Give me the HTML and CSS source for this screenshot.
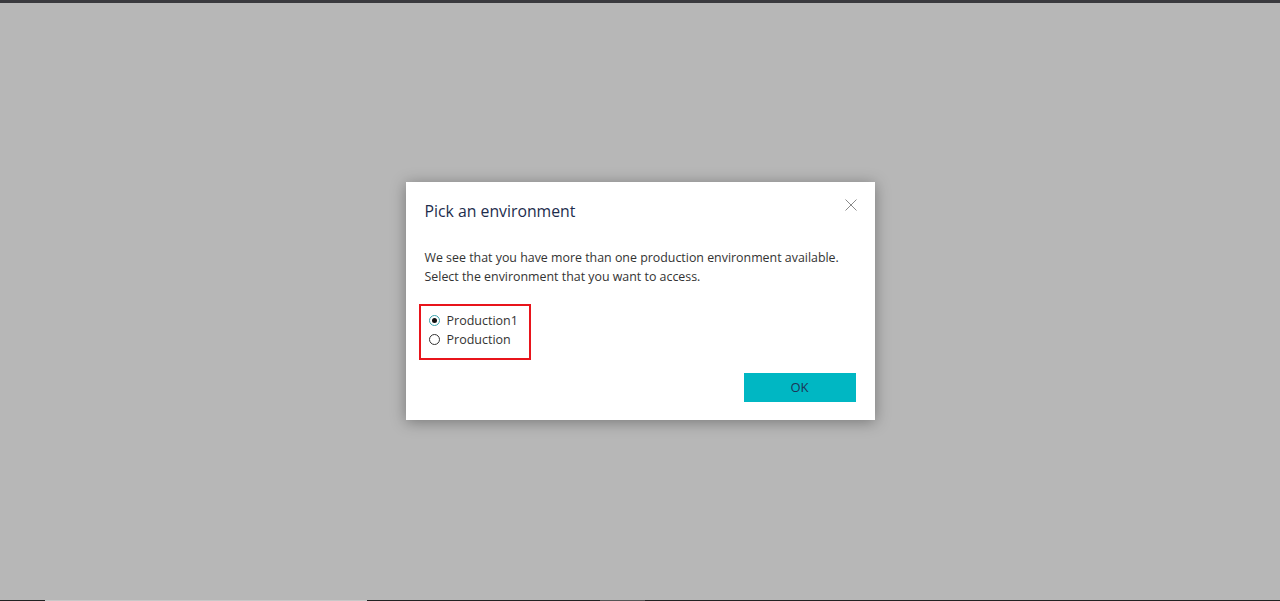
FILE: index.html
```html
<!DOCTYPE html>
<html lang="en">
<head>
    <meta charset="UTF-8">
    <meta name="viewport" content="width=device-width, initial-scale=1.0">
    <title>Pick an environment</title>
    <link rel="stylesheet" href="styles.css">
</head>
<body>
    <div class="top-bar"></div>

    <div class="overlay">
        <div class="dialog">
            <div class="dialog-header">
                <h2>Pick an environment</h2>
                <button class="close-btn" aria-label="Close">
                    <svg width="12" height="12" viewBox="0 0 12 12">
                        <path d="M0.5 0.5 L11.5 11.5 M11.5 0.5 L0.5 11.5" stroke="#8a8a8a" stroke-width="1" fill="none"/>
                    </svg>
                </button>
            </div>

            <p class="message">
                We see that you have more than one production environment available.<br>
                Select the environment that you want to access.
            </p>

            <div class="env-list">
                <label class="env-option">
                    <input type="radio" name="env" value="Production1" checked>
                    <span class="radio"></span>
                    Production1
                </label>
                <label class="env-option">
                    <input type="radio" name="env" value="Production">
                    <span class="radio"></span>
                    Production
                </label>
            </div>

            <div class="dialog-footer">
                <button class="ok-btn">OK</button>
            </div>
        </div>
    </div>

    <div class="bottom-strip">
        <span class="seg dark" style="width: 45px"></span>
        <span class="seg light" style="width: 322px"></span>
        <span class="seg dark" style="width: 233px"></span>
        <span class="seg mid" style="width: 45px"></span>
        <span class="seg dark grow"></span>
    </div>
</body>
</html>
```

FILE: styles.css
```css
* {
    box-sizing: border-box;
    font-family: 'Open Sans', 'Noto Sans', sans-serif;
}

body {
    background-color: #b7b7b7;
    margin: 0;
    padding: 0;
    height: 100vh;
    display: flex;
    flex-direction: column;
    overflow: hidden;
}

.top-bar {
    height: 3px;
    background-color: #3a3a3e;
    flex-shrink: 0;
}

.overlay {
    flex: 1;
    display: flex;
    justify-content: center;
    align-items: center;
}

.dialog {
    background-color: white;
    width: 469px;
    height: 238px;
    margin-bottom: 2px;
    padding: 18px 19px 18px 19px;
    box-shadow: 0 2px 14px rgba(0, 0, 0, 0.35);
    display: flex;
    flex-direction: column;
}

.dialog-header {
    display: flex;
    justify-content: space-between;
    align-items: flex-start;
}

h2 {
    margin: 0;
    font-size: 15.8px;
    font-weight: normal;
    color: #1d2d4d;
    line-height: 22px;
}

.close-btn {
    background: none;
    border: none;
    padding: 0;
    margin-top: -1px;
    margin-right: -1px;
    width: 12px;
    height: 12px;
    cursor: pointer;
    display: flex;
}

.message {
    margin: 26px 0 0 0;
    font-size: 12.4px;
    line-height: 19.5px;
    color: #333;
}

.env-list {
    margin-top: 17px;
    margin-left: -6px;
    width: 112px;
    border: 2px solid #e8141b;
    padding: 5px 0 9px 8px;
    display: flex;
    flex-direction: column;
}

.env-option {
    display: flex;
    align-items: center;
    font-size: 12.5px;
    color: #333;
    height: 19px;
    cursor: pointer;
}

.env-option input {
    display: none;
}

.radio {
    width: 11px;
    height: 11px;
    border: 1px solid #333;
    border-radius: 50%;
    margin-right: 7px;
    position: relative;
    flex-shrink: 0;
}

.env-option input:checked + .radio {
    border-color: #3aa3ad;
}

.env-option input:checked + .radio::after {
    content: '';
    position: absolute;
    left: 2px;
    top: 2px;
    width: 5px;
    height: 5px;
    border-radius: 50%;
    background-color: #111;
}

.dialog-footer {
    margin-top: auto;
    display: flex;
    justify-content: flex-end;
}

.ok-btn {
    width: 112px;
    height: 29px;
    background-color: #00b7c3;
    color: #1d3557;
    border: none;
    font-size: 13px;
    cursor: pointer;
}

.bottom-strip {
    height: 1px;
    display: flex;
    flex-shrink: 0;
}

.seg {
    height: 1px;
}

.seg.dark {
    background-color: #222;
}

.seg.light {
    background-color: #c8c8c8;
}

.seg.mid {
    background-color: #555;
}

.seg.grow {
    flex: 1;
}
```
